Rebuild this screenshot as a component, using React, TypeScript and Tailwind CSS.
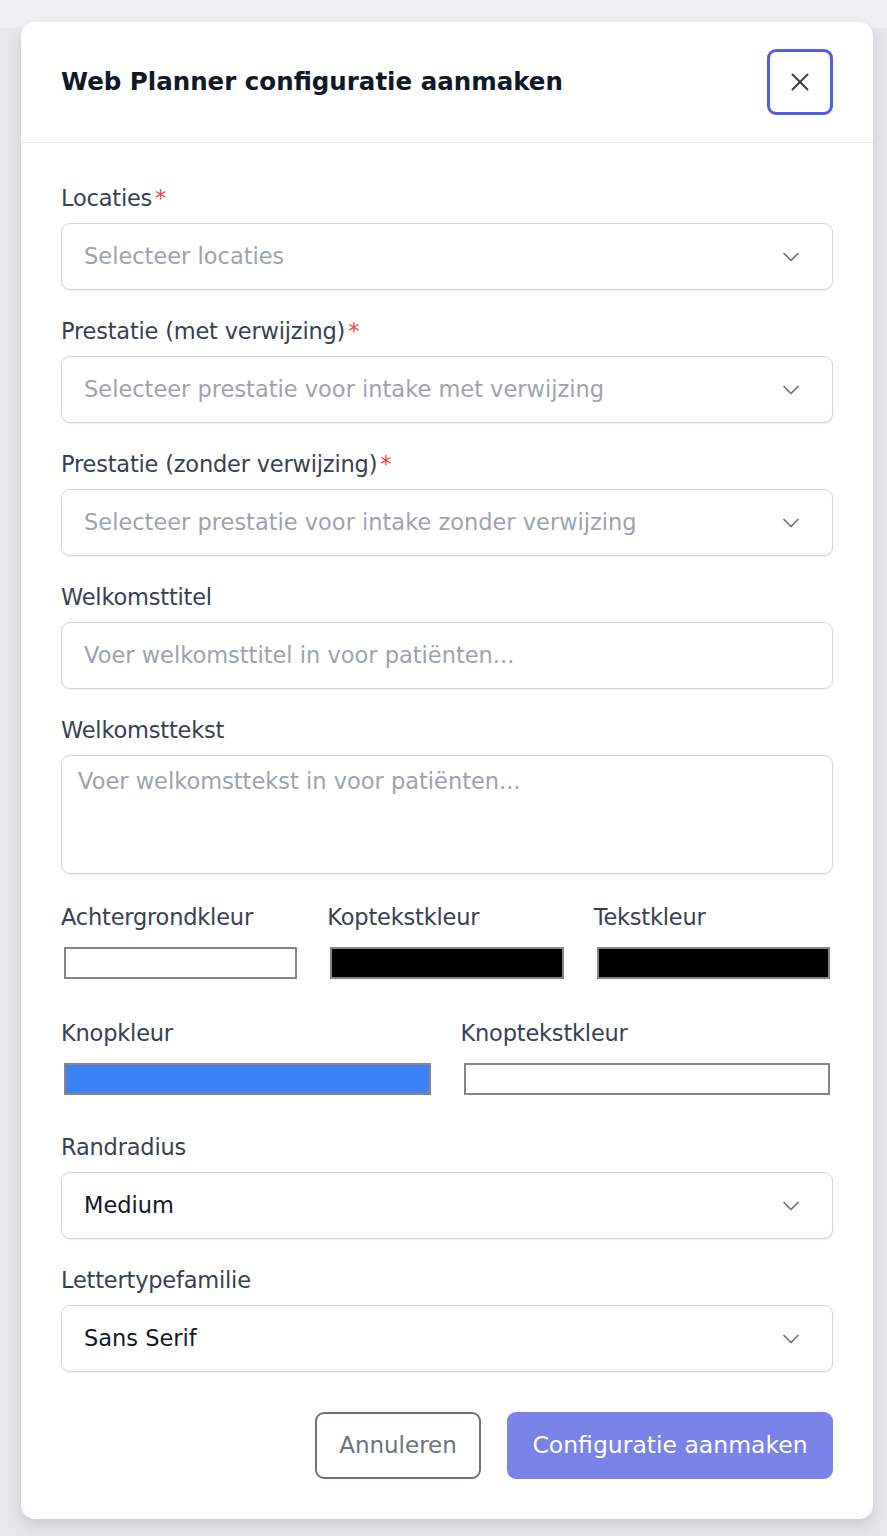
import { ChevronDown, X } from "lucide-react";

const font = { fontFamily: '"DejaVu Sans", "Open Sans", sans-serif' };

function Label({ text, required }: { text: string; required?: boolean }) {
  return (
    <label className="block h-[30px] whitespace-nowrap text-[22.5px] leading-[30px] tracking-[-0.2px] text-[#374151]">
      {text}
      {required && <span className="ml-[3px] text-[#ef4444]">*</span>}
    </label>
  );
}

function SelectBox({ value, placeholder }: { value?: string; placeholder?: string }) {
  return (
    <div className="mt-[10px] flex h-[67px] items-center justify-between rounded-[9px] border border-[#d1d5db] bg-white pl-[22px] pr-[27px] shadow-[0_1px_2px_rgba(0,0,0,0.06)]">
      {value ? (
        <span className="text-[22.5px] text-[#111827]">{value}</span>
      ) : (
        <span className="text-[22.5px] text-[#9ca3af]">{placeholder}</span>
      )}
      <ChevronDown className="h-[28px] w-[28px] text-[#6b7280]" strokeWidth={1.5} />
    </div>
  );
}

function Swatch({ color }: { color: string }) {
  return (
    <div className="p-[3px]">
      <div className="h-[32px] border-2 border-[#858585]" style={{ backgroundColor: color }} />
    </div>
  );
}

export default function App() {
  return (
    <div className="min-h-[1536px] bg-[#e6e7ea]" style={font}>
      <div className="h-[28px] bg-[#efeff1]" />
      <div className="-mt-[6px] ml-[21px] mr-[14px] pb-[16px]">
        <div className="overflow-hidden rounded-[14px] bg-white shadow-[0_6px_14px_rgba(0,0,0,0.12)]">
          {/* header */}
          <div className="flex h-[121px] items-center justify-between border-b border-[#e5e7eb] pl-[40px] pr-[40px]">
            <h2 className="text-[24.5px] font-bold text-[#111827]">Web Planner configuratie aanmaken</h2>
            <button className="flex h-[66px] w-[66px] items-center justify-center rounded-[9px] border-[3px] border-[#4f5fe6] text-[#374151]">
              <X className="h-[30px] w-[30px]" strokeWidth={1.6} />
            </button>
          </div>

          {/* body */}
          <div className="px-[40px] pt-[40px] pb-[40px]">
            <Label text="Locaties" required />
            <SelectBox placeholder="Selecteer locaties" />

            <div className="mt-[26px]">
              <Label text="Prestatie (met verwijzing)" required />
              <SelectBox placeholder="Selecteer prestatie voor intake met verwijzing" />
            </div>

            <div className="mt-[26px]">
              <Label text="Prestatie (zonder verwijzing)" required />
              <SelectBox placeholder="Selecteer prestatie voor intake zonder verwijzing" />
            </div>

            <div className="mt-[26px]">
              <Label text="Welkomsttitel" />
              <div className="mt-[10px] flex h-[67px] items-center rounded-[9px] border border-[#d1d5db] pl-[22px] shadow-[0_1px_2px_rgba(0,0,0,0.06)]">
                <span className="text-[22.5px] text-[#9ca3af]">Voer welkomsttitel in voor patiënten...</span>
              </div>
            </div>

            <div className="mt-[26px]">
              <Label text="Welkomsttekst" />
              <div className="mt-[10px] h-[119px] rounded-[9px] border border-[#d1d5db] px-[16px] pt-[8px] shadow-[0_1px_2px_rgba(0,0,0,0.06)]">
                <span className="text-[22.5px] leading-[34px] text-[#9ca3af]">Voer welkomsttekst in voor patiënten...</span>
              </div>
            </div>

            <div className="mt-[28px] grid grid-cols-3 gap-x-[27px]">
              {[
                ["Achtergrondkleur", "#ffffff"],
                ["Koptekstkleur", "#000000"],
                ["Tekstkleur", "#000000"],
              ].map(([name, color]) => (
                <div key={name}>
                  <Label text={name} />
                  <div className="mt-[12px]">
                    <Swatch color={color} />
                  </div>
                </div>
              ))}
            </div>

            <div className="mt-[36px] grid grid-cols-2 gap-x-[27px]">
              {[
                ["Knopkleur", "#3b82f6"],
                ["Knoptekstkleur", "#ffffff"],
              ].map(([name, color]) => (
                <div key={name}>
                  <Label text={name} />
                  <div className="mt-[12px]">
                    <Swatch color={color} />
                  </div>
                </div>
              ))}
            </div>

            <div className="mt-[34px]">
              <Label text="Randradius" />
              <SelectBox value="Medium" />
            </div>

            <div className="mt-[26px]">
              <Label text="Lettertypefamilie" />
              <SelectBox value="Sans Serif" />
            </div>

            <div className="mt-[40px] flex justify-end gap-[26px]">
              <button className="h-[67px] w-[166px] rounded-[9px] border-2 border-[#6b7280] text-[23px] text-[#6b7280]">
                Annuleren
              </button>
              <button className="h-[67px] w-[326px] rounded-[9px] bg-[#7983e8] text-[23.5px] text-white">
                Configuratie aanmaken
              </button>
            </div>
          </div>
        </div>
      </div>
    </div>
  );
}
